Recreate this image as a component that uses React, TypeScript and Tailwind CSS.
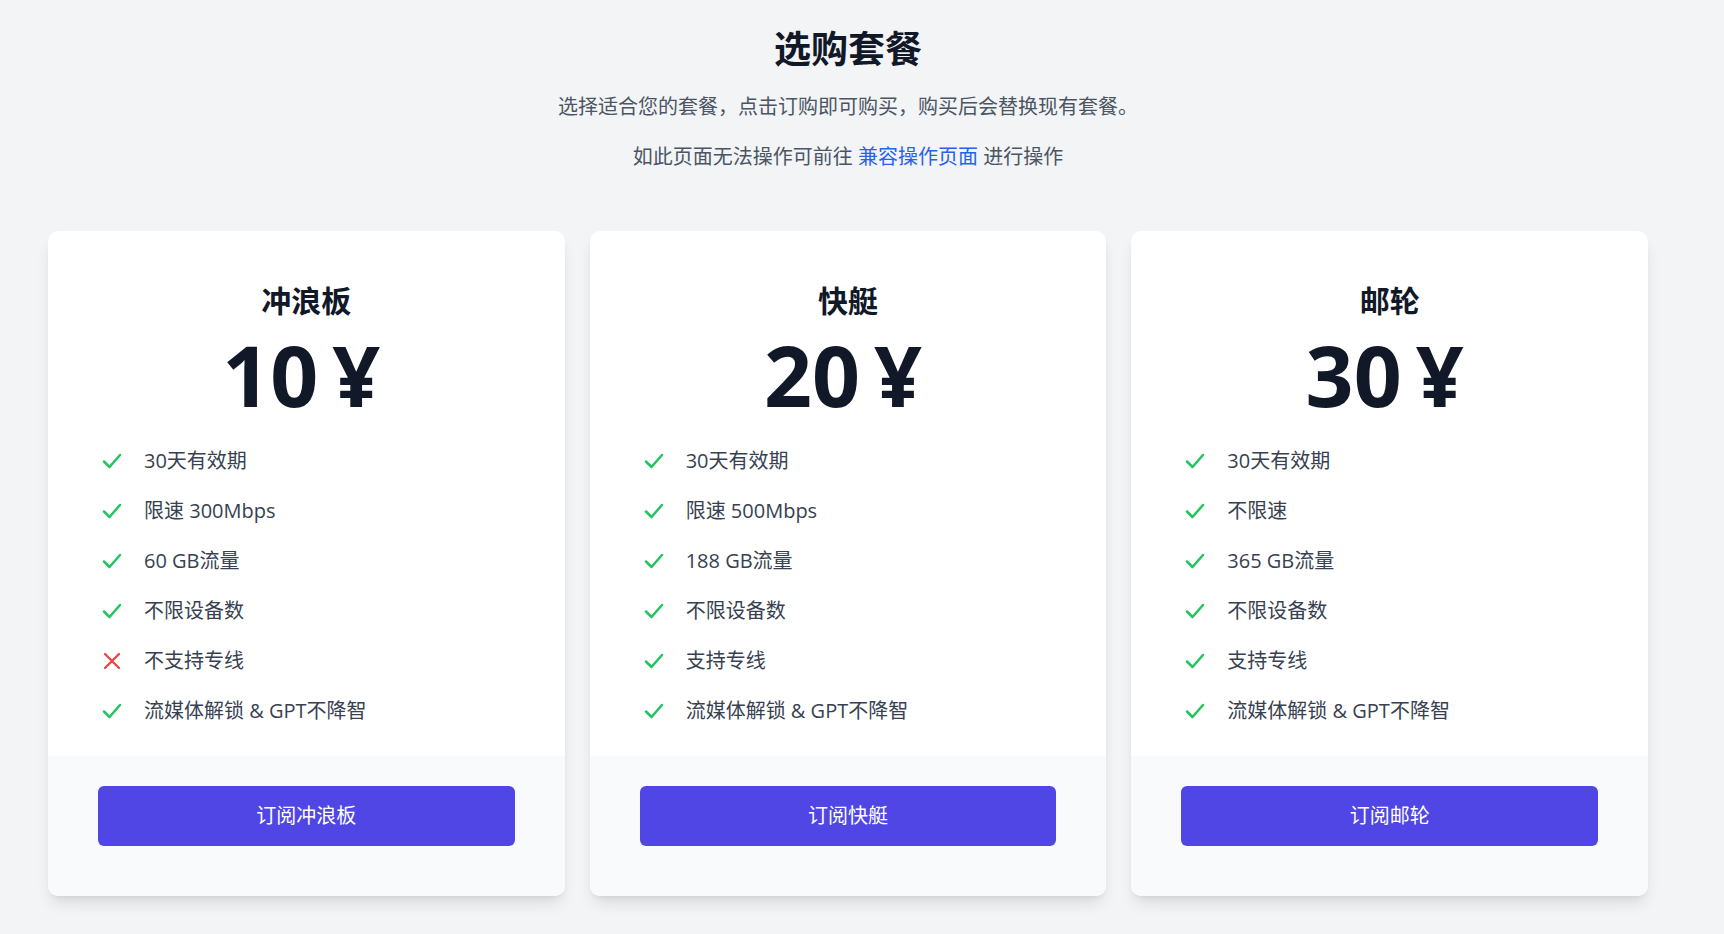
const plans = [
  {
    name: '冲浪板',
    price: '10',
    features: [
      { text: '30天有效期', ok: true },
      { text: '限速 300Mbps', ok: true },
      { text: '60 GB流量', ok: true },
      { text: '不限设备数', ok: true },
      { text: '不支持专线', ok: false },
      { text: '流媒体解锁 & GPT不降智', ok: true },
    ],
  },
  {
    name: '快艇',
    price: '20',
    features: [
      { text: '30天有效期', ok: true },
      { text: '限速 500Mbps', ok: true },
      { text: '188 GB流量', ok: true },
      { text: '不限设备数', ok: true },
      { text: '支持专线', ok: true },
      { text: '流媒体解锁 & GPT不降智', ok: true },
    ],
  },
  {
    name: '邮轮',
    price: '30',
    features: [
      { text: '30天有效期', ok: true },
      { text: '不限速', ok: true },
      { text: '365 GB流量', ok: true },
      { text: '不限设备数', ok: true },
      { text: '支持专线', ok: true },
      { text: '流媒体解锁 & GPT不降智', ok: true },
    ],
  },
];

function CheckIcon() {
  return (
    <svg width="20" height="16" viewBox="0 0 20 16" fill="none" className="text-[#22c55e]">
      <path d="M2 8.5l5.5 5.5L18 2" stroke="currentColor" strokeWidth="2.5" strokeLinecap="round" strokeLinejoin="round" />
    </svg>
  );
}

function CrossIcon() {
  return (
    <svg width="18" height="18" viewBox="0 0 18 18" fill="none" className="text-[#ef4444]">
      <path d="M2 2l14 14M16 2L2 16" stroke="currentColor" strokeWidth="2.3" strokeLinecap="round" />
    </svg>
  );
}

function PlanCard({ plan }: { plan: (typeof plans)[number] }) {
  return (
    <div className="flex flex-col overflow-hidden rounded-[10px] bg-white shadow-lg">
      <div className="flex flex-col pt-[52px] pb-[31px]">
        <h2 className="text-center text-3xl leading-9 font-bold text-[#111827]">{plan.name}</h2>
        <div className="mt-[14px] pr-[10px] text-center text-[84px] leading-none font-bold text-[#111827]">
          {plan.price}
          <span className="ml-[14px]">¥</span>
        </div>
        <ul className="mt-[30px] flex flex-col gap-[22px] pl-[54px]">
          {plan.features.map((f) => (
            <li key={f.text} className="flex items-center gap-[22px] text-xl leading-7 text-[#374151]">
              <span className="flex w-[20px] justify-center">{f.ok ? <CheckIcon /> : <CrossIcon />}</span>
              <span>{f.text}</span>
            </li>
          ))}
        </ul>
      </div>
      <div className="flex-1 bg-[#f9fafb] px-[50px] pt-[30px] pb-[50px]">
        <button className="h-[60px] w-full rounded-md bg-[#4f46e5] text-xl text-white">订阅{plan.name}</button>
      </div>
    </div>
  );
}

export default function App() {
  return (
    <main
      className="min-h-screen w-full bg-[#f3f4f6]"
      style={{ fontFamily: '"Open Sans", "Noto Sans CJK SC", sans-serif' }}>
      <div className="w-[1696px] pt-[29px] pb-10">
        <div className="text-center">
          <h1 className="text-[37px] leading-10 font-bold text-[#111827]">选购套餐</h1>
          <p className="mt-6 text-xl leading-7 text-[#4b5563]">
            选择适合您的套餐，点击订购即可购买，购买后会替换现有套餐。
          </p>
          <p className="mt-[22px] text-xl leading-7 text-[#4b5563]">
            如此页面无法操作可前往 <a className="text-[#2563eb]">兼容操作页面</a> 进行操作
          </p>
        </div>
        <div className="mx-auto mt-[60px] grid max-w-[1600px] grid-cols-3 gap-[25px]">
          {plans.map((p) => (
            <PlanCard key={p.name} plan={p} />
          ))}
        </div>
      </div>
    </main>
  );
}
